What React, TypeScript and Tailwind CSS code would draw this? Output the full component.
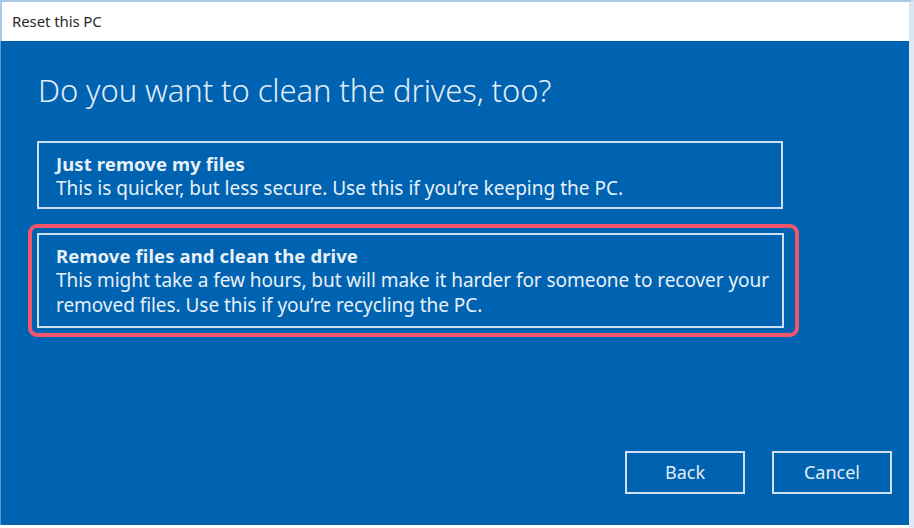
export default function App() {
  const font = { fontFamily: '"Noto Sans", "Open Sans", sans-serif' };
  return (
    <div className="w-[914px] h-[528px] bg-white flex flex-col" style={font}>
      <div className="h-[41px] border-t-2 border-l-2 border-r-[5px] border-[#a9c9ea] border-r-[#d8e6f4] flex items-center pl-[10px] bg-white">
        <span className="text-[15px] text-[#2a2a2a] tracking-[-0.1px]">Reset this PC</span>
      </div>
      <div className="flex-1 flex">
        <div className="flex-1 bg-[#0063b1] border-l-[1px] border-[#5d9ad3] flex flex-col mb-[3px]">
          <h1 className="ml-[37px] mt-[29px] text-[31px] font-light text-[#e3ecf6] leading-[40px] tracking-[-0.1px]">
            Do you want to clean the drives, too?
          </h1>
          <div className="ml-[36px] mt-[31px] w-[746px] h-[68px] border-2 border-[#cfe0f2] pl-[17px] pt-[8px] text-[#e8f0f8]">
            <div className="text-[18.5px] font-bold leading-[25px] tracking-[0.1px]">Just remove my files</div>
            <div className="text-[19px] leading-[25px]">
              This is quicker, but less secure. Use this if you’re keeping the PC.
            </div>
          </div>
          <div className="ml-[27px] mt-[15px] w-[771px] h-[113px] border-4 border-[#f2566b] rounded-[9px] pl-[5px] pt-[5px]">
            <div className="w-[747px] h-[95px] border-2 border-[#cfe0f2] pl-[17px] pt-[8px] text-[#e8f0f8]">
              <div className="text-[18.5px] font-bold leading-[25px] tracking-[0.1px]">Remove files and clean the drive</div>
              <div className="text-[19px] leading-[25px] tracking-[-0.05px]">
                This might take a few hours, but will make it harder for someone to recover your removed files. Use this if you’re recycling the PC.
              </div>
            </div>
          </div>
          <div className="mt-auto mb-[31px] flex justify-end gap-[27px] pr-[17px]">
            <button className="w-[120px] h-[43px] border-2 border-[#cfe0f2] text-[#e3ecf6] text-[18px]">Back</button>
            <button className="w-[120px] h-[43px] border-2 border-[#cfe0f2] text-[#e3ecf6] text-[18px]">Cancel</button>
          </div>
        </div>
        <div className="w-[5px] bg-[#dfe9f4]" />
      </div>
    </div>
  );
}
